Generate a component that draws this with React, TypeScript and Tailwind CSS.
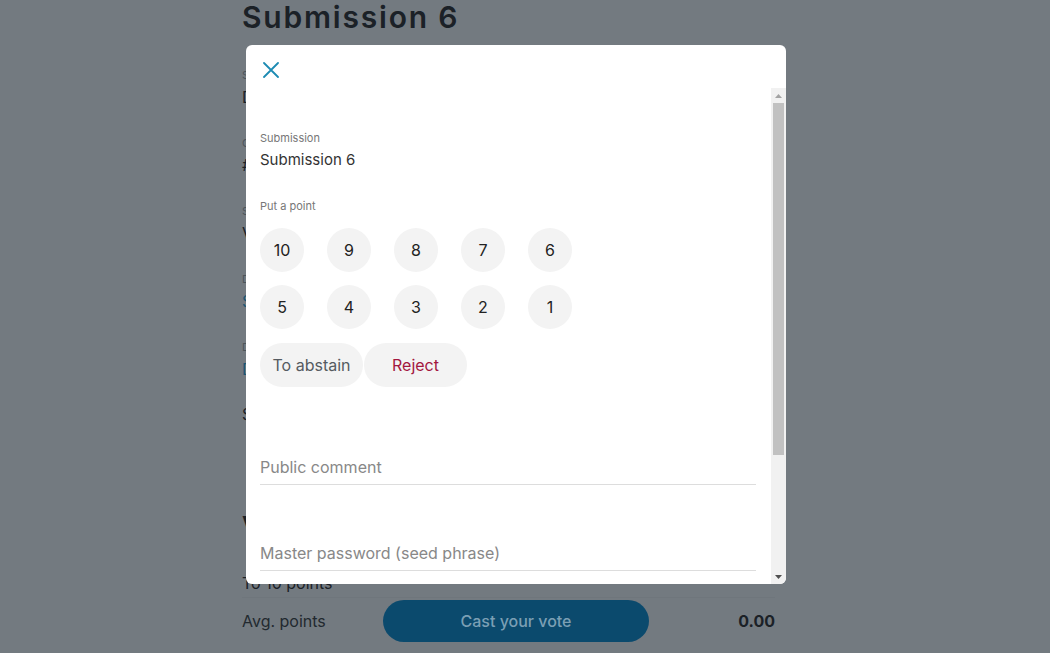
import React from "react";

const font = { fontFamily: "Inter, 'Noto Sans', sans-serif" };

function BgField({ label, value, blue }: { label: string; value: string; blue?: boolean }) {
  return (
    <div className="flex flex-col">
      <div className="text-[11px] leading-[14px] text-[#4c545a]">{label}</div>
      <div className={`mt-[5px] text-[16px] leading-[20px] ${blue ? "text-[#1b5573]" : "text-[#1b2127]"}`}>{value}</div>
    </div>
  );
}

function Circle({ children }: { children: React.ReactNode }) {
  return (
    <div className="w-[44px] h-[44px] rounded-full bg-[#f3f3f3] flex items-center justify-center text-[16px] text-[#222]">
      {children}
    </div>
  );
}

export default function App() {
  const points1 = [10, 9, 8, 7, 6];
  const points2 = [5, 4, 3, 2, 1];
  return (
    <div className="relative w-[1050px] h-[653px] overflow-hidden bg-[#737a80]" style={font}>
      {/* Background page (dimmed) */}
      <div className="ml-[242px] w-[533px] flex flex-col">
        <h1 className="mt-[2px] text-[30px] leading-none font-semibold text-[#1b2127] tracking-[1.8px]">Submission 6</h1>
        <div className="mt-[36px] flex flex-col gap-[29px]">
          <BgField label="Stage" value="Done" />
          <BgField label="Code" value="#6" />
          <BgField label="Status" value="Voting" />
          <BgField label="Description" value="Show" blue />
          <BgField label="Document" value="Download" blue />
        </div>
        <div className="mt-[25px] text-[16px] leading-[20px] text-[#1b2127]">Submitted</div>
        <h2 className="mt-[88px] text-[24px] leading-[28px] font-bold text-[#1b2127]">Voting</h2>
        <div className="mt-[33px] text-[16px] leading-[20px] text-[#1b2127]">To 10 points</div>
        <div className="mt-[4px] border-t border-[#6f767c] pt-[2px] flex items-center">
          <span className="w-[141px] shrink-0 text-[16px] text-[#22292f]">Avg. points</span>
          <div className="w-[266px] h-[42px] rounded-full bg-[#0b4a6d] flex items-center justify-center text-[16px] text-[#7b9fb4] font-medium">
            Cast your vote
          </div>
          <span className="flex-1 text-right text-[16px] font-bold text-[#1b2127]">0.00</span>
        </div>
      </div>

      {/* Modal */}
      <div className="absolute left-[246px] top-[45px] w-[540px] h-[539px] bg-white rounded-[6px] overflow-hidden flex flex-col">
        <div className="h-[43px] shrink-0 pl-[17px] pt-[17px]">
          <svg width="16" height="16" viewBox="0 0 16 16" fill="none" stroke="#1d8bb3" strokeWidth="1.8" strokeLinecap="round">
            <path d="M1 1 L15 15 M15 1 L1 15" />
          </svg>
        </div>
        <div className="flex-1 min-h-0 flex">
          <div className="flex-1 overflow-hidden pl-[14px] pr-[15px]">
            <div className="pt-[43px] pb-[100px]">
              <div className="text-[11px] leading-[14px] text-[#777]">Submission</div>
              <div className="mt-[5px] text-[15px] leading-[20px] text-[#333]">Submission 6</div>
              <div className="mt-[29px] text-[11px] leading-[14px] text-[#777]">Put a point</div>
              <div className="mt-[15px] flex flex-col gap-[13px]">
                <div className="flex gap-[23px]">
                  {points1.map((p) => (
                    <Circle key={p}>{p}</Circle>
                  ))}
                </div>
                <div className="flex gap-[23px]">
                  {points2.map((p) => (
                    <Circle key={p}>{p}</Circle>
                  ))}
                </div>
                <div className="flex gap-[1px] mt-[1px]">
                  <div className="w-[103px] h-[44px] rounded-full bg-[#f3f3f3] flex items-center justify-center text-[16px] text-[#555b61]">
                    To abstain
                  </div>
                  <div className="w-[103px] h-[44px] rounded-full bg-[#f3f3f3] flex items-center justify-center text-[16px] text-[#a3173f]">
                    Reject
                  </div>
                </div>
              </div>
              <div className="mt-[63px] h-[35px] border-b border-[#ddd] flex items-center">
                <span className="text-[16px] text-[#888]">Public comment</span>
              </div>
              <div className="mt-[51px] h-[35px] border-b border-[#ddd] flex items-center">
                <span className="text-[16px] text-[#888]">Master password (seed phrase)</span>
              </div>
            </div>
          </div>
          {/* scrollbar */}
          <div className="w-[15px] shrink-0 bg-[#f1f1f1] flex flex-col">
            <div className="h-[15px] flex items-center justify-center">
              <svg width="7" height="4" viewBox="0 0 7 4"><path d="M0 4 L3.5 0 L7 4 Z" fill="#a3a3a3" /></svg>
            </div>
            <div className="mx-[2px] h-[352px] bg-[#c1c1c1]" />
            <div className="flex-1" />
            <div className="h-[15px] flex items-center justify-center">
              <svg width="7" height="4" viewBox="0 0 7 4"><path d="M0 0 L7 0 L3.5 4 Z" fill="#505050" /></svg>
            </div>
          </div>
        </div>
      </div>
    </div>
  );
}
